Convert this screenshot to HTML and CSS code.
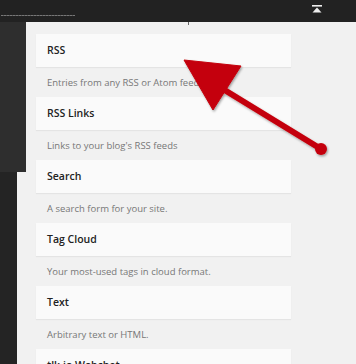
FILE: index.html
```html
<!DOCTYPE html>
<html lang="en">
<head>
    <meta charset="UTF-8">
    <meta name="viewport" content="width=device-width, initial-scale=1.0">
    <title>Widgets</title>
    <link rel="stylesheet" href="styles.css">
</head>
<body>

<div class="topbar">
    <div class="topbar-dashes"></div>
    <div class="topbar-icon">
        <svg width="10" height="8" viewBox="0 0 10 8">
            <rect x="0" y="0" width="10" height="1.6" fill="#eee"/>
            <polygon points="5,2.4 9.5,7.5 0.5,7.5" fill="#eee"/>
        </svg>
    </div>
</div>

<div class="layout">
    <div class="sidebar">
        <div class="sidebar-top"></div>
        <div class="sidebar-bottom"></div>
    </div>
    <div class="main">
        <span class="tick"></span>
        <div class="widget-list">
            <div class="widget">
                <div class="widget-title">RSS</div>
                <div class="widget-desc">Entries from any RSS or Atom feed.</div>
            </div>
            <div class="widget">
                <div class="widget-title">RSS Links</div>
                <div class="widget-desc">Links to your blog's RSS feeds</div>
            </div>
            <div class="widget">
                <div class="widget-title">Search</div>
                <div class="widget-desc">A search form for your site.</div>
            </div>
            <div class="widget">
                <div class="widget-title">Tag Cloud</div>
                <div class="widget-desc">Your most-used tags in cloud format.</div>
            </div>
            <div class="widget">
                <div class="widget-title">Text</div>
                <div class="widget-desc">Arbitrary text or HTML.</div>
            </div>
            <div class="widget">
                <div class="widget-title">tlk.io Webchat</div>
            </div>
        </div>
    </div>
</div>

<!-- annotation arrow drawn over the screenshot -->
<svg class="arrow" width="356" height="364" viewBox="0 0 356 364">
    <defs>
        <filter id="shadow" x="-10%" y="-10%" width="130%" height="130%">
            <feDropShadow dx="1" dy="1.5" stdDeviation="1.2" flood-color="#000" flood-opacity="0.35"/>
        </filter>
    </defs>
    <g filter="url(#shadow)" fill="#c4000a" stroke="#c4000a">
        <line x1="218" y1="86" x2="321" y2="149" stroke-width="6" stroke-linecap="round"/>
        <circle cx="321" cy="149" r="6" stroke="none"/>
        <polygon points="184,60 241,66 213,110" stroke-width="1" stroke-linejoin="round"/>
    </g>
</svg>

</body>
</html>
```

FILE: styles.css
```css
body {
    margin: 0;
    width: 356px;
    height: 364px;
    overflow: hidden;
    background-color: #f1f1f1;
    font-family: "Open Sans", Arial, sans-serif;
    position: relative;
}
.topbar {
    height: 22px;
    background-color: #222;
    display: flex;
    align-items: flex-start;
    justify-content: space-between;
}
.topbar-dashes {
    margin-top: 15px;
    margin-left: 1px;
    width: 74px;
    height: 1px;
    background: repeating-linear-gradient(90deg, #777 0 2px, #555 2px 3px);
}
.topbar-icon {
    margin-top: 5px;
    margin-right: 34px;
    height: 8px;
}
.topbar-icon svg {
    display: block;
}
.layout {
    display: flex;
    height: 342px;
    overflow: hidden;
}
.sidebar {
    width: 26px;
    display: flex;
    flex-direction: column;
}
.sidebar-top {
    height: 150px;
    background-color: #2e2e2e;
}
.sidebar-bottom {
    flex: 1;
    width: 17px;
    background-color: #242424;
}
.main {
    flex: 1;
    position: relative;
    padding: 12px 0 0 10px;
    border-top: 1px solid #fdfdfd;
    margin-top: -1px;
}
.tick {
    position: absolute;
    left: 162px;
    top: 0;
    width: 1px;
    height: 3px;
    background-color: #666;
}
.widget-list {
    width: 255px;
}
.widget-title {
    height: 33px;
    line-height: 33px;
    padding: 0 11px;
    background-color: #fafafa;
    box-shadow: 0 1px 1px rgba(0, 0, 0, 0.05);
    font-size: 10.5px;
    font-weight: 600;
    color: #222;
}
.widget-desc {
    height: 30px;
    box-sizing: border-box;
    padding: 8px 11px 0;
    line-height: 16px;
    font-size: 9.5px;
    color: #777;
}
.arrow {
    position: absolute;
    left: 0;
    top: 0;
}
```
